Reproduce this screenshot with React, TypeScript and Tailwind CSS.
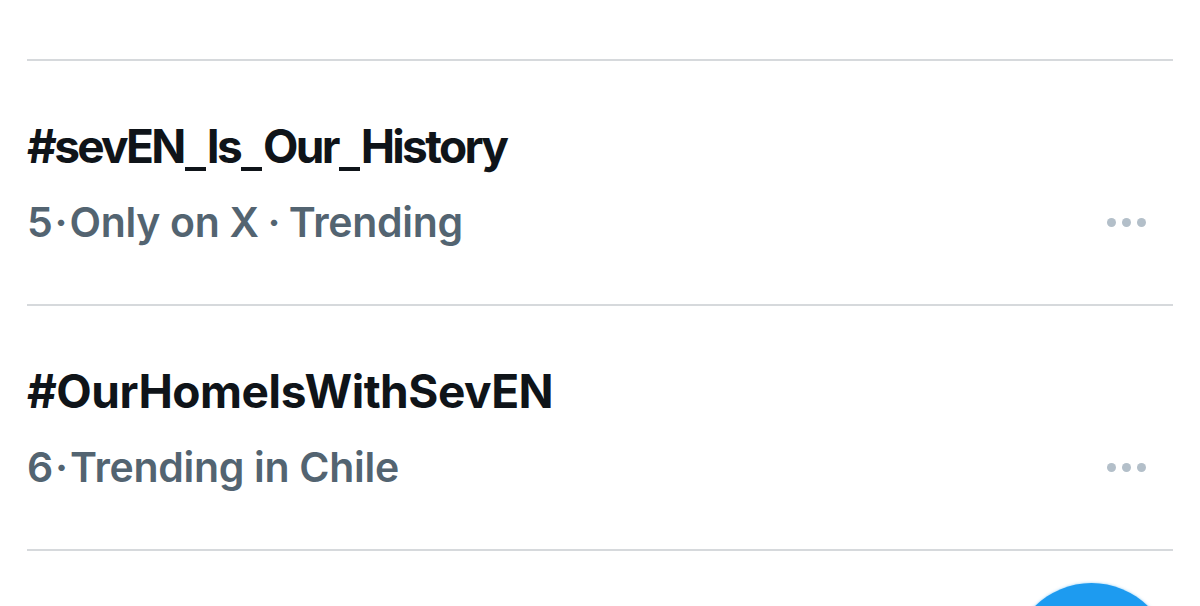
import React from "react";

function Dots() {
  return (
    <div className="flex items-center gap-[6px] pr-[27px]">
      <span className="block w-[9px] h-[9px] rounded-full bg-[#b3bfc9]" />
      <span className="block w-[9px] h-[9px] rounded-full bg-[#b3bfc9]" />
      <span className="block w-[9px] h-[9px] rounded-full bg-[#b3bfc9]" />
    </div>
  );
}

function U() {
  return <span className="inline-block w-[21px] h-[4px] mx-[1px] bg-current align-[-8px]" />;
}

function RankSep() {
  return <span className="inline-block w-[17px] text-center">·</span>;
}

function Sep() {
  return <span className="inline-block w-[30px] text-center">·</span>;
}

function Trend({
  title,
  meta,
  titleClass,
}: {
  title: React.ReactNode;
  meta: React.ReactNode;
  titleClass: string;
}) {
  return (
    <div className="h-[245px] border-b-2 border-[#d6d9dc] pt-[57px] flex flex-col">
      <div className={`text-[46px] leading-[56px] font-bold text-[#0f1419] whitespace-nowrap ${titleClass}`}>{title}</div>
      <div className="mt-[22px] flex items-center justify-between">
        <div className="text-[41px] leading-[52px] font-semibold text-[#536471] tracking-[-0.3px] whitespace-nowrap">{meta}</div>
        <Dots />
      </div>
    </div>
  );
}

export default function App() {
  return (
    <div
      className="relative w-[1200px] h-[606px] overflow-hidden bg-white"
      style={{ fontFamily: "Inter, 'Noto Sans', sans-serif" }}
    >
      <div className="mx-[27px]">
        <div className="h-[61px] border-b-2 border-[#d6d9dc]" />
        <Trend
          titleClass="tracking-[-2.7px]"
          title={<>#sevEN<U />Is<U />Our<U />History</>}
          meta={<>5<RankSep />Only on X<Sep />Trending</>}
        />
        <Trend
          titleClass="tracking-[-0.5px]"
          title={<>#OurHomeIsWithSevEN</>}
          meta={<>6<RankSep />Trending in Chile</>}
        />
      </div>
      <div className="absolute left-[1011px] top-[583px] w-[161px] h-[161px] rounded-full bg-[#1d9bf0] shadow-[0_0_3px_rgba(29,155,240,0.5)]" />
    </div>
  );
}
